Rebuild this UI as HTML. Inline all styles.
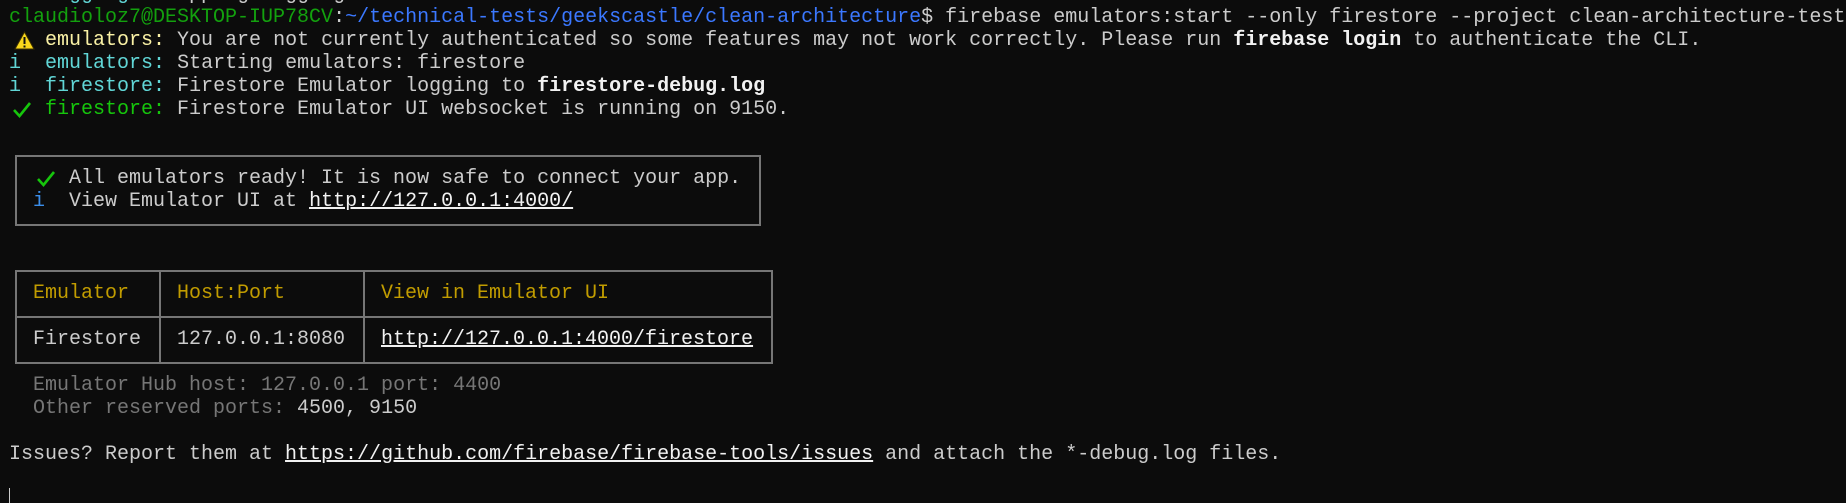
<!DOCTYPE html>
<html><head><meta charset="utf-8"><style>
body{margin:0;width:1846px;height:503px;background:#0c0c0c;overflow:hidden;position:relative;font-family:"Liberation Mono","DejaVu Sans Mono",monospace;font-size:20px;color:#cccccc}
.l{position:absolute;left:9px;height:23px;line-height:23px;white-space:pre}
.g{color:#13a10e}.b{color:#3b78ff}.y{color:#f9f1a5}.c{color:#61d6d6}.gr{color:#16c60c}
.w{color:#f2f2f2;font-weight:bold}.u{color:#f2f2f2;text-decoration:underline}
.gold{color:#c19c00}.dim{color:#767676}.bl{color:#3b8eea}
.box{position:absolute;border:2px solid #767676;box-sizing:border-box}
.tb{position:absolute;background:#767676}
.ck{position:absolute}
</style></head><body>
<div class="l" style="top:-17px"><span class="c">i</span>  <span class="c">logging:</span> Stopping Logging Emulator</div>
<div class="l" style="top:6px"><span class="g">claudioloz7@DESKTOP-IUP78CV</span>:<span class="b">~/technical-tests/geekscastle/clean-architecture</span>$ firebase emulators:start --only firestore --project clean-architecture-test</div>
<svg class="ck" style="left:14px;top:31px" width="21" height="19" viewBox="0 0 21 19"><path d="M10.5 1 L20 18 L1 18 Z" fill="#f9d71c" stroke="#3a2e00" stroke-width="1"/><rect x="9.5" y="6" width="2" height="7" fill="#111"/><rect x="9.5" y="14.5" width="2" height="2" fill="#111"/></svg>
<div class="l" style="top:29px">   <span class="y">emulators:</span> You are not currently authenticated so some features may not work correctly. Please run <span class="w">firebase login</span> to authenticate the CLI.</div>
<div class="l" style="top:52px"><span class="c">i</span>  <span class="c">emulators:</span> Starting emulators: firestore</div>
<div class="l" style="top:75px"><span class="c">i</span>  <span class="c">firestore:</span> Firestore Emulator logging to <span class="w">firestore-debug.log</span></div>
<svg class="ck" style="left:12px;top:101px" width="20" height="17" viewBox="0 0 20 17"><path d="M2 9 L7.5 15 L18 2" fill="none" stroke="#16c60c" stroke-width="2.6"/></svg>
<div class="l" style="top:98px">   <span class="gr">firestore:</span> Firestore Emulator UI websocket is running on 9150.</div>

<div class="box" style="left:15px;top:155px;width:746px;height:71px"></div>
<svg class="ck" style="left:36px;top:170px" width="20" height="17" viewBox="0 0 20 17"><path d="M2 9 L7.5 15 L18 2" fill="none" stroke="#16c60c" stroke-width="2.6"/></svg>
<div class="l" style="top:167px;left:33px">   All emulators ready! It is now safe to connect your app.</div>
<div class="l" style="top:190px;left:33px"><span class="bl">i</span>  View Emulator UI at <span class="u">http://127.0.0.1:4000/</span></div>

<div class="box" style="left:15px;top:270px;width:758px;height:94px"></div>
<div class="tb" style="left:15px;top:316px;width:758px;height:2px"></div>
<div class="tb" style="left:159px;top:270px;width:2px;height:94px"></div>
<div class="tb" style="left:363px;top:270px;width:2px;height:94px"></div>
<div class="l gold" style="top:282px;left:33px">Emulator</div>
<div class="l gold" style="top:282px;left:177px">Host:Port</div>
<div class="l gold" style="top:282px;left:381px">View in Emulator UI</div>
<div class="l" style="top:328px;left:33px">Firestore</div>
<div class="l" style="top:328px;left:177px">127.0.0.1:8080</div>
<div class="l" style="top:328px;left:381px"><span class="u">http://127.0.0.1:4000/firestore</span></div>

<div class="l dim" style="top:374px">  Emulator Hub host: 127.0.0.1 port: 4400</div>
<div class="l" style="top:397px"><span class="dim">  Other reserved ports:</span> 4500, 9150</div>
<div class="l" style="top:443px">Issues? Report them at <span class="u">https://github.com/firebase/firebase-tools/issues</span> and attach the *-debug.log files.</div>
<div style="position:absolute;left:9px;top:488px;width:1px;height:15px;background:#cccccc"></div>
</body></html>
